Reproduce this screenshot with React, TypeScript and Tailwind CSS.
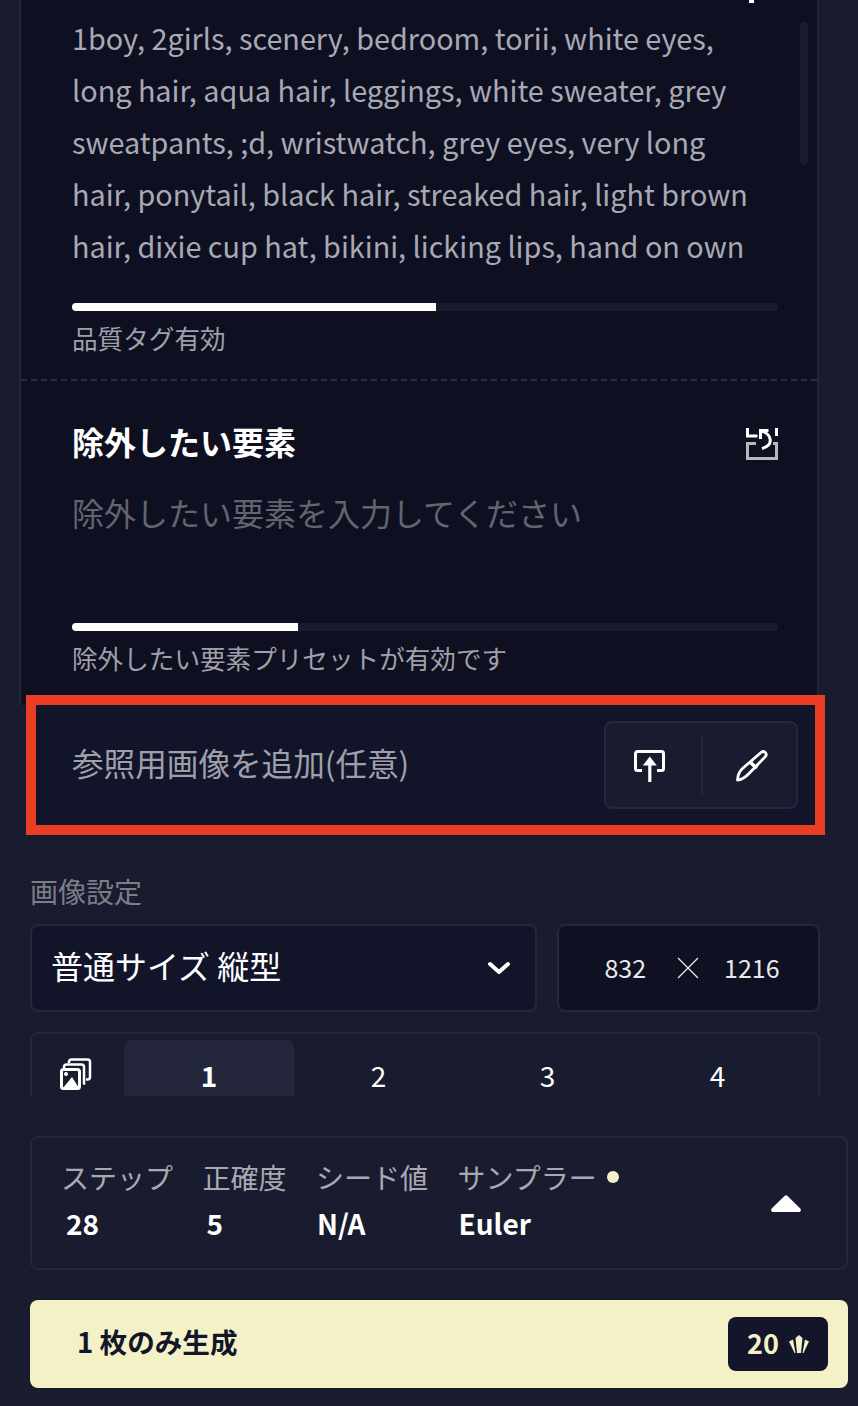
import React from 'react';

const JP = 'font-["Noto_Sans_CJK_JP","Noto_Sans",sans-serif]';

const ResetIcon = () => (
  <svg width="32" height="32" viewBox="0 0 32 32" fill="none">
    <path d="M10 15.500H1.500v15h29v-15H27" stroke="#b7b7bf" strokeWidth="3" />
    <path d="M1.500 0v8h10M30.500 0v8" stroke="#ffffff" strokeWidth="3" />
    <path d="M14.500 11V2.500h8M15 3c10 2 14 14 1 17.500" stroke="#ffffff" strokeWidth="3" />
  </svg>
);

const UploadIcon = () => (
  <svg width="32" height="32" viewBox="0 0 32 32" fill="none">
    <path d="M8 20.500H3.500a2 2 0 0 1-2-2v-15a2 2 0 0 1 2-2h24a2 2 0 0 1 2 2v15a2 2 0 0 1-2 2H23" stroke="#fff" strokeWidth="3" />
    <path d="M14.200 32V15.500H8.800l7-9 7 9h-5.400V32z" fill="#fff" />
  </svg>
);

const BrushIcon = () => (
  <svg width="32" height="32" viewBox="0 0 32 32" fill="none">
    <path d="M25 2.500c1.700-1.500 3.400-1 4.400.1 1 1.100 1 2.900-.4 4.300L13.500 23c-2.800 3-6.500 6.800-12 7 .2-4.200 1.700-8.400 5-11.500z" stroke="#fff" strokeWidth="2.800" strokeLinejoin="round" />
    <path d="M12.500 13l7 6.500 2.500-2.500-7-6.500z" fill="#fff" />
  </svg>
);

const GalleryIcon = () => (
  <svg width="32" height="32" viewBox="0 0 32 32" fill="none">
    <path d="M9 5V3.500A2.500 2.500 0 0 1 11.500 1.500h16a2.500 2.500 0 0 1 2.500 2.500v15a2.500 2.500 0 0 1-2.500 2.500H26" stroke="#fff" strokeWidth="2.500" />
    <path d="M4 10V9a2.500 2.500 0 0 1 2.500-2.500h15A2.500 2.500 0 0 1 24 9v16.500h-1" stroke="#fff" strokeWidth="2.500" />
    <rect x="1.500" y="11.500" width="18" height="19" rx="2" stroke="#fff" strokeWidth="3" />
    <circle cx="6" cy="16" r="2" fill="#fff" />
    <path d="M3 30l9-11 7 11z" fill="#fff" />
  </svg>
);

const ChevronIcon = () => (
  <svg width="24" height="14" viewBox="0 0 24 14" fill="none">
    <path d="M3 3l9 8 9-8" stroke="#fff" strokeWidth="4" strokeLinecap="round" strokeLinejoin="round" />
  </svg>
);

const TimesIcon = () => (
  <svg width="22" height="22" viewBox="0 0 22 22" fill="none">
    <path d="M1 1l20 20M21 1L1 21" stroke="#e8e8ec" strokeWidth="1.300" />
  </svg>
);

const CaretIcon = () => (
  <svg width="30" height="17" viewBox="0 0 30 17" fill="none">
    <path d="M13.500 1a2 2 0 0 1 3 0l12.800 12.600c1 1 .6 3.400-1 3.400H1.700c-1.600 0-2-2.400-1-3.400z" fill="#fff" />
  </svg>
);

const AnlasIcon = () => (
  <svg width="20" height="18" viewBox="0 0 20 18" fill="#f5f1c6">
    <path d="M10 0l3.500 3L12 18H8L6.500 3z" />
    <path d="M0 6.500L4 4.500 6.500 18H5.500zM20 6.500L16 4.500 13.500 18h1z" />
  </svg>
);

const Bar = ({ fill }: { fill: string }) => (
  <div className="h-2 w-full overflow-hidden rounded-full bg-[#1a1c2e]">
    <div className={`h-full bg-white ${fill}`} />
  </div>
);

const Stat = ({ label, value, dot, indent }: { label: string; value: string; dot?: boolean; indent: string }) => (
  <div className="flex flex-col">
    <div className="mb-[6px] flex items-center gap-[10px] text-[28px] leading-[40px] text-[#a9a9b2]">
      {label}
      {dot && <span className="h-3 w-3 rounded-full bg-[#f5f1c6]" />}
    </div>
    <div className={`text-[28px] font-bold leading-[40px] text-white ${indent}`}>{value}</div>
  </div>
);

export default function App() {
  return (
    <div className={`${JP} h-[1406px] w-[858px] overflow-hidden bg-[#191c2e]`}>
      <div className="ml-[19px] h-[705px] w-[800px] border-x-2 border-[#22243a] bg-[#0e1021]">
        <div className="relative h-[381px] border-b-2 border-dashed border-[#2a2c42] pl-[51px] pr-[39px]">
          <div className="absolute left-[728px] top-0 h-[3px] w-[5px] bg-white" />
          <div className="absolute left-[779px] top-[22px] h-[143px] w-2 rounded-full bg-[#1a1c2e]" />
          <p className="h-[303px] w-[680px] overflow-hidden pt-[12px] text-[28.8px] leading-[52px] text-[#a9a9b4]">
            1boy, 2girls, scenery, bedroom, torii, white eyes, long hair, aqua hair, leggings, white sweater, grey sweatpants, ;d, wristwatch, grey eyes, very long hair, ponytail, black hair, streaked hair, light brown hair, dixie cup hat, bikini, licking lips, hand on own
          </p>
          <Bar fill="w-[364px]" />
          <p className="mt-[10px] text-[25.6px] leading-[34px] text-[#a0a0aa]">品質タグ有効</p>
        </div>
        <div className="pl-[51px] pr-[39px]">
          <div className="flex items-start justify-between pt-[40px]">
            <h3 className="text-[32px] font-bold leading-[40px] text-white">除外したい要素</h3>
            <div className="pt-[7px]"><ResetIcon /></div>
          </div>
          <p className="mt-[23px] h-[139px] text-[32px] leading-[56px] text-[#63646f]">除外したい要素を入力してください</p>
          <Bar fill="w-[226px]" />
          <p className="mt-[10px] text-[25.6px] leading-[34px] text-[#a0a0aa]">除外したい要素プリセットが有効です</p>
        </div>
      </div>

      <div className="ml-[26px] -mt-[10px] flex h-[140px] w-[799px] items-center justify-between border-[10px] border-[#ea3e24] bg-[#12152a] pl-[36px] pr-[17px]">
        <span className="pb-1 text-[31.6px] text-[#a0a0aa]">参照用画像を追加(任意)</span>
        <div className="flex h-[88px] w-[194px] items-center rounded-lg border-2 border-[#25273d] bg-[#191c2e]">
          <button className="flex w-[95px] justify-center pr-[7px] pt-[2px]"><UploadIcon /></button>
          <div className="h-[60px] w-[2px] bg-[#25273d]" />
          <button className="flex flex-1 justify-center pl-[5px] pt-[2px]"><BrushIcon /></button>
        </div>
      </div>

      <div className="px-[30px]">
        <p className="mt-[35px] text-[28px] leading-[42px] text-[#7c7d88]">画像設定</p>
        <div className="mt-[12px] flex w-[790px] gap-5">
          <div className="flex h-[88px] w-[507px] items-center justify-between rounded-lg border-2 border-[#25273d] bg-[#12142a] pl-[19px] pr-[24px] text-[32px] text-white">
            <span className="pb-[6px]">普通サイズ 縦型</span>
            <ChevronIcon />
          </div>
          <div className="flex h-[88px] flex-1 items-center justify-center gap-7 rounded-lg border-2 border-[#25273d] bg-[#0f1022] pl-[7px] text-[25px] text-[#e8e8ec]">
            <span>832</span>
            <span className="ml-[3px] -mr-[3px]"><TimesIcon /></span>
            <span>1216</span>
          </div>
        </div>
        <div className="mt-[20px] flex h-[64px] w-[790px] items-start rounded-t-lg border-x-2 border-t-2 border-[#25273d] pt-[6px] text-[28px] text-white">
          <div className="flex w-[92px] justify-center pr-1 pt-[18px]"><GalleryIcon /></div>
          <div className="flex h-[56px] w-[170px] justify-center rounded-t-lg bg-[#24263c] pt-[13px] font-bold leading-[44px]">1</div>
          <div className="flex h-[56px] w-[169px] justify-center pt-[13px] leading-[44px]">2</div>
          <div className="flex h-[56px] w-[169px] justify-center pt-[13px] leading-[44px]">3</div>
          <div className="flex h-[56px] w-[169px] justify-center pl-[2px] pt-[13px] leading-[44px]">4</div>
        </div>
        <div className="mt-[40px] flex h-[134px] w-[818px] items-center justify-between rounded-lg border-2 border-[#25273d] pl-[29px] pr-[45px]">
          <div className="flex gap-[29.5px] pb-[6px]">
            <Stat label="ステップ" value="28" indent="pl-[5px]" />
            <Stat label="正確度" value="5" indent="pl-[4px]" />
            <Stat label="シード値" value="N/A" indent="pl-[1px]" />
            <Stat label="サンプラー" value="Euler" indent="pl-[1px]" dot />
          </div>
          <CaretIcon />
        </div>
        <button className="mt-[30px] flex h-[88px] w-[818px] items-center justify-between rounded-lg bg-[#f5f1c6] pl-[47px] pr-5">
          <span className="pb-1 text-[27.6px] font-bold text-[#13152b]">1 枚のみ生成</span>
          <span className="flex h-[54px] w-[100px] items-center justify-center gap-[10px] rounded-lg bg-[#13152b] text-[27px] font-bold text-[#f5f1c6]">
            <span className="pb-[2px]">20</span>
            <AnlasIcon />
          </span>
        </button>
      </div>
    </div>
  );
}
